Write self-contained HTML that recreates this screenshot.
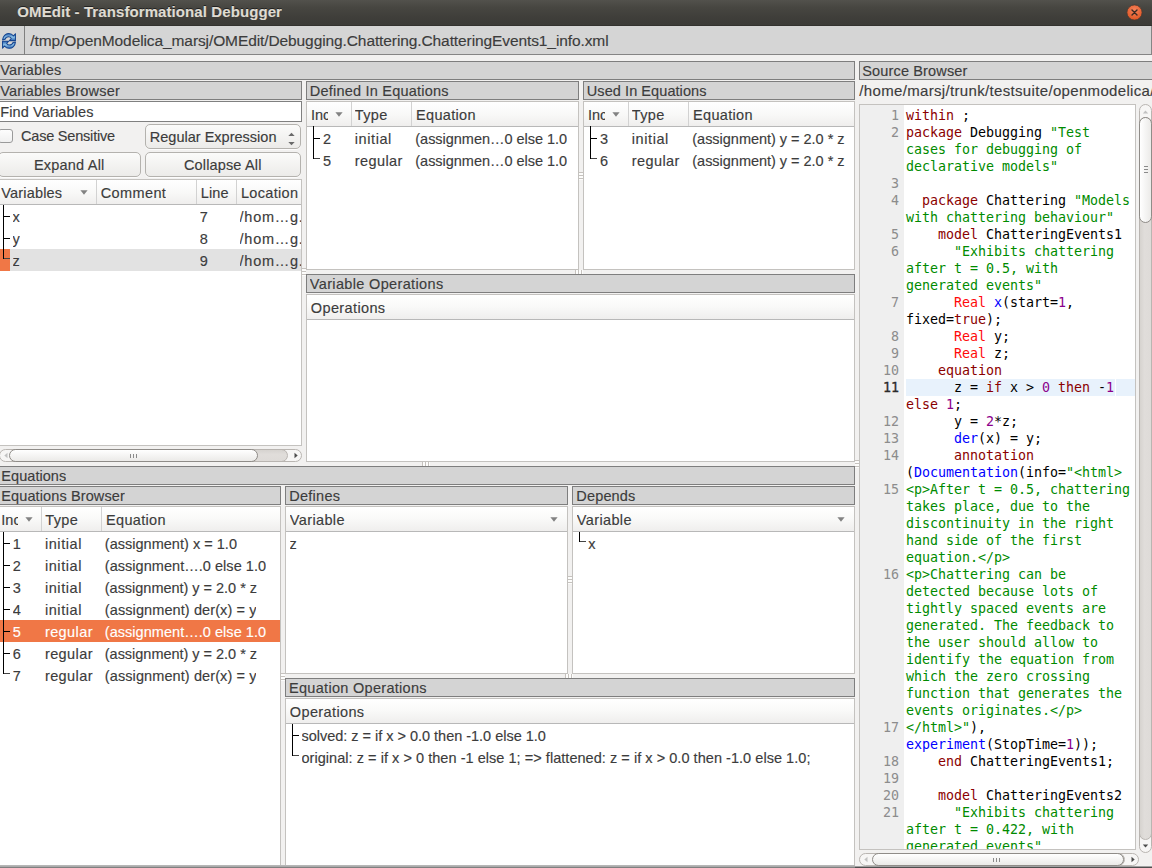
<!DOCTYPE html>
<html lang="en"><head><meta charset="utf-8"><title>OMEdit - Transformational Debugger</title>
<style>
html,body{margin:0;padding:0;}
body{width:1152px;height:868px;overflow:hidden;background:#f2f1f0;position:relative;font-family:"Liberation Sans", sans-serif;font-size:14.5px;color:#3c3c3c;}
body>div,body>svg,body>span{position:absolute;box-sizing:border-box;}
.t{white-space:pre;line-height:20px;overflow:hidden;-webkit-text-stroke:0.15px;}
.hd{background:#d4d4d4;border:1px solid #7e7e7e;}
.tw{background:#fff;border:1px solid #c4c2bf;}
.th{background:linear-gradient(#ffffff 0%,#f9f9f8 50%,#efeeed 100%);border-bottom:1px solid #b8b8b8;}
.btn{background:linear-gradient(#fbfbfa,#ecebe9);border:1px solid #b4b2ae;border-radius:5px;box-shadow:0 1px 0 rgba(255,255,255,.8);}
.sbo{background:#f7f6f5;border:1px solid #b9b5b1;border-radius:7px;}
.sbh{background:linear-gradient(#d6d3cf,#e0ddda 40%,#dedbd8);border:1px solid #b9b5b1;border-radius:7px;}
.sbv{background:linear-gradient(90deg,#d6d3cf,#e0ddda 40%,#dedbd8);border:1px solid #b9b5b1;border-radius:7px;}
.thumbh{background:linear-gradient(#ffffff,#ebeae8);border:1px solid #8f8c88;border-radius:7px;}
.thumbv{background:linear-gradient(90deg,#ffffff,#ebeae8);border:1px solid #8f8c88;border-radius:7px;}
#code{font-family:"DejaVu Sans Mono", "Liberation Mono", monospace;font-size:13.33px;line-height:17px;white-space:pre;color:#000;letter-spacing:-0.024px;}
#code div{position:absolute;left:0;height:17px;}
#code .n{color:#8c8c8c;width:39px;text-align:right;}
#code .c{left:46px;}
.k{color:#8b0000;} .s{color:#008b00;} .ty{color:#ff0a0a;} .f{color:#0000ff;} .nu{color:#8b008b;}
</style></head>
<body>
<div style="left:0px;top:0px;width:1152px;height:26px;background:linear-gradient(#52514c 0%,#474641 30%,#3e3d39 75%,#3c3b37 100%);border-bottom:1px solid #33322e;"></div>
<span class="t" style="left:17.3px;top:1.80px;font-size:15px;font-weight:bold;letter-spacing:0.089px;color:#dfdbd2;text-shadow:0 -1px 0 #222;">OMEdit - Transformational Debugger</span>
<svg style="left:1126px;top:4px" width="17" height="17" viewBox="0 0 17 17"><defs><radialGradient id="cg" cx="50%" cy="35%" r="65%"><stop offset="0" stop-color="#f5835c"/><stop offset="1" stop-color="#df5522"/></radialGradient></defs><circle cx="8.5" cy="8.5" r="7.6" fill="url(#cg)" stroke="#4a3a32" stroke-width="0.8"/><path d="M6 6 L11 11 M11 6 L6 11" stroke="#3a2a22" stroke-width="1.4" stroke-linecap="round"/></svg>
<div style="left:0px;top:26px;width:1152px;height:29px;background:#d5d5d5;border-bottom:1px solid #858585;border-right:1px solid #858585;"></div>
<div style="left:24px;top:26px;width:1px;height:29px;background:#808080;"></div>
<span class="t" style="left:30.3px;top:30.63px;font-size:15.5px;letter-spacing:-0.098px;">/tmp/OpenModelica_marsj/OMEdit/Debugging.Chattering.ChatteringEvents1_info.xml</span>
<svg style="left:0px;top:26px" width="24" height="29" viewBox="0 0 24 29"><defs><linearGradient id="rg" x1="0" y1="0" x2="0" y2="1"><stop offset="0" stop-color="#2a62b0"/><stop offset="0.5" stop-color="#8ec3e8"/><stop offset="1" stop-color="#2a62b0"/></linearGradient></defs><g transform="translate(9 14.95) scale(0.92) translate(-9 -14.95)" fill="url(#rg)" stroke="#15448f" stroke-width="1.1" stroke-linejoin="round"><path d="M2 13.9 C2.3 9.6 5.4 6.9 8.6 6.9 C10.9 6.9 12.7 7.9 13.9 9.5 L16 7.1 L16 14.6 L9.4 14.6 L11.5 12.3 C10.8 11.1 9.8 10.5 8.6 10.5 C6.9 10.5 5.3 11.5 4.7 13.2 Z"/><path d="M2 13.9 C2.3 9.6 5.4 6.9 8.6 6.9 C10.9 6.9 12.7 7.9 13.9 9.5 L16 7.1 L16 14.6 L9.4 14.6 L11.5 12.3 C10.8 11.1 9.8 10.5 8.6 10.5 C6.9 10.5 5.3 11.5 4.7 13.2 Z" transform="rotate(180 9 14.95)"/></g></svg>
<div class="hd" style="left:-1px;top:61px;width:856px;height:19px;"></div>
<span class="t" style="left:0.3px;top:60.18px;letter-spacing:0.203px;">Variables</span>
<div class="hd" style="left:-1px;top:81px;width:303px;height:19px;"></div>
<span class="t" style="left:0.3px;top:80.68px;letter-spacing:0.177px;">Variables Browser</span>
<div style="left:-1px;top:101px;width:303px;height:21px;background:#fff;border:1px solid #808080;"></div>
<span class="t" style="left:0.3px;top:101.58px;letter-spacing:0.114px;">Find Variables</span>
<div style="left:-2px;top:129px;width:15px;height:14px;background:linear-gradient(#fdfdfd,#f0f0f0);border:1px solid #9a9a9a;border-radius:3px;"></div>
<span class="t" style="left:21.0px;top:125.98px;letter-spacing:-0.201px;">Case Sensitive</span>
<div class="btn" style="left:145px;top:124px;width:156px;height:25px;"></div>
<span class="t" style="left:149.8px;top:126.98px;letter-spacing:0.009px;">Regular Expression</span>
<svg style="left:288px;top:130px" width="7" height="16" viewBox="0 0 7 16"><path d="M0.3 6 L3.5 2.8 L6.7 6 Z M0.3 12 L3.5 15.2 L6.7 12 Z" fill="#6a6a6a"/></svg>
<div class="btn" style="left:-2px;top:152px;width:143px;height:25px;"></div>
<span class="t" style="left:34.0px;top:154.58px;letter-spacing:0.197px;">Expand All</span>
<div class="btn" style="left:145px;top:152px;width:156px;height:25px;"></div>
<span class="t" style="left:184.0px;top:154.58px;letter-spacing:0.145px;">Collapse All</span>
<div class="tw" style="left:-1px;top:179px;width:303px;height:267px;"></div>
<div class="th" style="left:0px;top:180px;width:301px;height:25px;"></div>
<span class="t" style="left:1.3px;top:182.58px;letter-spacing:0.169px;">Variables</span>
<div style="left:96px;top:180px;width:1px;height:24px;background:#d2d2d2;"></div>
<span class="t" style="left:100.7px;top:182.58px;letter-spacing:0.392px;">Comment</span>
<div style="left:196px;top:180px;width:1px;height:24px;background:#d2d2d2;"></div>
<span class="t" style="left:200.7px;top:182.58px;letter-spacing:0.170px;">Line</span>
<div style="left:236px;top:180px;width:1px;height:24px;background:#d2d2d2;"></div>
<span class="t" style="left:241.0px;top:182.58px;letter-spacing:0.309px;">Location</span>
<svg style="left:80px;top:190px" width="8" height="5" viewBox="0 0 8 5"><path d="M0.4 0.2 L7.6 0.2 L4 4.8 Z" fill="#828282"/></svg>
<div style="left:0px;top:249px;width:301px;height:22px;background:#e2e2e2;"></div>
<div style="left:0px;top:249px;width:10px;height:22px;background:#f07746;"></div>
<div style="left:3px;top:205px;width:1px;height:54px;background:#000;"></div>
<div style="left:4px;top:216px;width:6px;height:1px;background:#000;"></div>
<div style="left:4px;top:238px;width:6px;height:1px;background:#000;"></div>
<div style="left:4px;top:258px;width:6px;height:1px;background:#444;"></div>
<span class="t" style="left:12.6px;top:206.98px;">x</span>
<span class="t" style="left:199.8px;top:206.98px;">7</span>
<span class="t" style="left:239.6px;top:206.98px;width:61.5px;letter-spacing:0.722px;">/hom…g.</span>
<span class="t" style="left:12.6px;top:228.98px;">y</span>
<span class="t" style="left:199.8px;top:228.98px;">8</span>
<span class="t" style="left:239.6px;top:228.98px;width:61.5px;letter-spacing:0.722px;">/hom…g.</span>
<span class="t" style="left:12.6px;top:250.98px;">z</span>
<span class="t" style="left:199.8px;top:250.98px;">9</span>
<span class="t" style="left:239.6px;top:250.98px;width:61.5px;letter-spacing:0.722px;">/hom…g.</span>
<div class="sbo" style="left:-1px;top:449px;width:303px;height:13px;"></div>
<div class="sbh" style="left:13px;top:449px;width:275px;height:13px;"></div>
<div class="thumbh" style="left:9px;top:449px;width:249px;height:13px;"></div>
<svg style="left:4px;top:452px" width="4" height="7" viewBox="0 0 4 7"><path d="M3.5 0.8 L0.3 3.5 L3.5 6.2 Z" fill="#c2c2c2"/></svg>
<svg style="left:294px;top:452px" width="4" height="7" viewBox="0 0 4 7"><path d="M0.5 0.8 L3.7 3.5 L0.5 6.2 Z" fill="#4c4c4c"/></svg>
<div style="left:130px;top:454px;width:1px;height:4px;background:#8a8a8a;"></div>
<div style="left:133px;top:454px;width:1px;height:4px;background:#8a8a8a;"></div>
<div style="left:136px;top:454px;width:1px;height:4px;background:#8a8a8a;"></div>
<div class="hd" style="left:306px;top:81px;width:273px;height:19px;"></div>
<span class="t" style="left:309.8px;top:80.68px;letter-spacing:0.219px;">Defined In Equations</span>
<div class="tw" style="left:306px;top:101px;width:273px;height:169px;"></div>
<div class="th" style="left:307px;top:102px;width:271px;height:25px;"></div>
<span class="t" style="left:310.9px;top:104.58px;width:17px;">Inc</span>
<div style="left:351px;top:102px;width:1px;height:24px;background:#d2d2d2;"></div>
<span class="t" style="left:354.8px;top:104.58px;letter-spacing:0.341px;">Type</span>
<div style="left:411px;top:102px;width:1px;height:24px;background:#d2d2d2;"></div>
<span class="t" style="left:416.1px;top:104.58px;letter-spacing:0.319px;">Equation</span>
<svg style="left:335px;top:112px" width="8" height="5" viewBox="0 0 8 5"><path d="M0.4 0.2 L7.6 0.2 L4 4.8 Z" fill="#828282"/></svg>
<div style="left:313px;top:126px;width:1px;height:33px;background:#000;"></div>
<div style="left:314px;top:138px;width:6px;height:1px;background:#000;"></div>
<div style="left:314px;top:158px;width:6px;height:1px;background:#444;"></div>
<span class="t" style="left:323.1px;top:128.98px;">2</span>
<span class="t" style="left:354.8px;top:128.98px;letter-spacing:0.579px;">initial</span>
<span class="t" style="left:415.3px;top:128.98px;letter-spacing:-0.030px;">(assignmen…0 else 1.0</span>
<span class="t" style="left:323.1px;top:150.98px;">5</span>
<span class="t" style="left:354.8px;top:150.98px;letter-spacing:0.408px;">regular</span>
<span class="t" style="left:415.3px;top:150.98px;letter-spacing:-0.030px;">(assignmen…0 else 1.0</span>
<div class="hd" style="left:583px;top:81px;width:272px;height:19px;"></div>
<span class="t" style="left:586.8px;top:80.68px;letter-spacing:0.071px;">Used In Equations</span>
<div class="tw" style="left:583px;top:101px;width:272px;height:169px;"></div>
<div class="th" style="left:584px;top:102px;width:270px;height:25px;"></div>
<span class="t" style="left:587.9px;top:104.58px;width:17px;">Inc</span>
<div style="left:628px;top:102px;width:1px;height:24px;background:#d2d2d2;"></div>
<span class="t" style="left:631.8px;top:104.58px;letter-spacing:0.341px;">Type</span>
<div style="left:688px;top:102px;width:1px;height:24px;background:#d2d2d2;"></div>
<span class="t" style="left:693.1px;top:104.58px;letter-spacing:0.319px;">Equation</span>
<svg style="left:612px;top:112px" width="8" height="5" viewBox="0 0 8 5"><path d="M0.4 0.2 L7.6 0.2 L4 4.8 Z" fill="#828282"/></svg>
<div style="left:590px;top:126px;width:1px;height:33px;background:#000;"></div>
<div style="left:591px;top:138px;width:6px;height:1px;background:#000;"></div>
<div style="left:591px;top:158px;width:6px;height:1px;background:#444;"></div>
<span class="t" style="left:600.1px;top:128.98px;">3</span>
<span class="t" style="left:631.8px;top:128.98px;letter-spacing:0.579px;">initial</span>
<span class="t" style="left:692.3px;top:128.98px;letter-spacing:-0.022px;">(assignment) y = 2.0 * z</span>
<span class="t" style="left:600.1px;top:150.98px;">6</span>
<span class="t" style="left:631.8px;top:150.98px;letter-spacing:0.408px;">regular</span>
<span class="t" style="left:692.3px;top:150.98px;letter-spacing:-0.022px;">(assignment) y = 2.0 * z</span>
<div class="hd" style="left:306px;top:274px;width:549px;height:19px;"></div>
<span class="t" style="left:309.8px;top:273.68px;letter-spacing:0.348px;">Variable Operations</span>
<div class="tw" style="left:306px;top:294px;width:549px;height:168px;"></div>
<div class="th" style="left:307px;top:295px;width:547px;height:25px;"></div>
<span class="t" style="left:310.8px;top:297.58px;letter-spacing:0.376px;">Operations</span>
<div class="hd" style="left:-1px;top:466px;width:856px;height:19px;"></div>
<span class="t" style="left:1.3px;top:465.78px;letter-spacing:0.056px;">Equations</span>
<div class="hd" style="left:-1px;top:486px;width:282px;height:19px;"></div>
<span class="t" style="left:1.3px;top:485.78px;letter-spacing:0.112px;">Equations Browser</span>
<div class="tw" style="left:-1px;top:506px;width:282px;height:366px;"></div>
<div class="th" style="left:0px;top:507px;width:280px;height:25px;"></div>
<span class="t" style="left:1.3px;top:509.58px;width:17px;">Inc</span>
<div style="left:41px;top:507px;width:1px;height:24px;background:#d2d2d2;"></div>
<span class="t" style="left:45.3px;top:509.58px;letter-spacing:0.341px;">Type</span>
<div style="left:101px;top:507px;width:1px;height:24px;background:#d2d2d2;"></div>
<span class="t" style="left:106.1px;top:509.58px;letter-spacing:0.319px;">Equation</span>
<svg style="left:25px;top:517px" width="8" height="5" viewBox="0 0 8 5"><path d="M0.4 0.2 L7.6 0.2 L4 4.8 Z" fill="#828282"/></svg>
<div style="left:0px;top:620px;width:280px;height:22px;background:#f07746;"></div>
<div style="left:3px;top:532px;width:1px;height:142px;background:#000;"></div>
<div style="left:4px;top:543px;width:6px;height:1px;background:#000;"></div>
<div style="left:4px;top:565px;width:6px;height:1px;background:#000;"></div>
<div style="left:4px;top:587px;width:6px;height:1px;background:#000;"></div>
<div style="left:4px;top:609px;width:6px;height:1px;background:#000;"></div>
<div style="left:4px;top:631px;width:6px;height:1px;background:#000;"></div>
<div style="left:4px;top:653px;width:6px;height:1px;background:#000;"></div>
<div style="left:4px;top:673px;width:6px;height:1px;background:#444;"></div>
<span class="t" style="left:12.8px;top:533.98px;">1</span>
<span class="t" style="left:44.9px;top:533.98px;letter-spacing:0.579px;">initial</span>
<span class="t" style="left:104.8px;top:533.98px;letter-spacing:0.021px;">(assignment) x = 1.0</span>
<span class="t" style="left:12.8px;top:555.98px;">2</span>
<span class="t" style="left:44.9px;top:555.98px;letter-spacing:0.579px;">initial</span>
<span class="t" style="left:104.8px;top:555.98px;letter-spacing:0.040px;">(assignment….0 else 1.0</span>
<span class="t" style="left:12.8px;top:577.98px;">3</span>
<span class="t" style="left:44.9px;top:577.98px;letter-spacing:0.579px;">initial</span>
<span class="t" style="left:104.8px;top:577.98px;letter-spacing:-0.022px;">(assignment) y = 2.0 * z</span>
<span class="t" style="left:12.8px;top:599.98px;">4</span>
<span class="t" style="left:44.9px;top:599.98px;letter-spacing:0.579px;">initial</span>
<span class="t" style="left:104.8px;top:599.98px;letter-spacing:0.096px;">(assignment) der(x) = y</span>
<span class="t" style="left:12.8px;top:621.98px;color:#fff;">5</span>
<span class="t" style="left:44.9px;top:621.98px;letter-spacing:0.408px;color:#fff;">regular</span>
<span class="t" style="left:104.8px;top:621.98px;letter-spacing:0.040px;color:#fff;">(assignment….0 else 1.0</span>
<span class="t" style="left:12.8px;top:643.98px;">6</span>
<span class="t" style="left:44.9px;top:643.98px;letter-spacing:0.408px;">regular</span>
<span class="t" style="left:104.8px;top:643.98px;letter-spacing:-0.022px;">(assignment) y = 2.0 * z</span>
<span class="t" style="left:12.8px;top:665.98px;">7</span>
<span class="t" style="left:44.9px;top:665.98px;letter-spacing:0.408px;">regular</span>
<span class="t" style="left:104.8px;top:665.98px;letter-spacing:0.096px;">(assignment) der(x) = y</span>
<div class="hd" style="left:285px;top:486px;width:283px;height:19px;"></div>
<span class="t" style="left:289.3px;top:485.68px;letter-spacing:0.247px;">Defines</span>
<div class="tw" style="left:285px;top:506px;width:283px;height:168px;"></div>
<div class="th" style="left:286px;top:507px;width:281px;height:25px;"></div>
<span class="t" style="left:289.8px;top:509.58px;letter-spacing:0.372px;">Variable</span>
<svg style="left:550px;top:517px" width="8" height="5" viewBox="0 0 8 5"><path d="M0.4 0.2 L7.6 0.2 L4 4.8 Z" fill="#828282"/></svg>
<span class="t" style="left:289.6px;top:533.98px;">z</span>
<div class="hd" style="left:572px;top:486px;width:283px;height:19px;"></div>
<span class="t" style="left:576.3px;top:485.68px;letter-spacing:0.165px;">Depends</span>
<div class="tw" style="left:572px;top:506px;width:283px;height:168px;"></div>
<div class="th" style="left:573px;top:507px;width:281px;height:25px;"></div>
<span class="t" style="left:576.8px;top:509.58px;letter-spacing:0.372px;">Variable</span>
<svg style="left:837px;top:517px" width="8" height="5" viewBox="0 0 8 5"><path d="M0.4 0.2 L7.6 0.2 L4 4.8 Z" fill="#828282"/></svg>
<div style="left:579px;top:532px;width:1px;height:10px;background:#000;"></div>
<div style="left:580px;top:541px;width:6px;height:1px;background:#444;"></div>
<span class="t" style="left:588.3px;top:533.98px;">x</span>
<div class="hd" style="left:285px;top:678px;width:570px;height:19px;"></div>
<span class="t" style="left:289.0px;top:677.68px;letter-spacing:0.300px;">Equation Operations</span>
<div class="tw" style="left:285px;top:698px;width:570px;height:174px;"></div>
<div class="th" style="left:286px;top:699px;width:568px;height:25px;"></div>
<span class="t" style="left:289.8px;top:701.58px;letter-spacing:0.376px;">Operations</span>
<div style="left:292px;top:724px;width:1px;height:32px;background:#000;"></div>
<div style="left:293px;top:735px;width:6px;height:1px;background:#000;"></div>
<div style="left:293px;top:755px;width:6px;height:1px;background:#444;"></div>
<span class="t" style="left:301.5px;top:725.98px;letter-spacing:-0.018px;">solved: z = if x &gt; 0.0 then -1.0 else 1.0</span>
<span class="t" style="left:301.5px;top:747.98px;letter-spacing:0.041px;">original: z = if x &gt; 0 then -1 else 1; =&gt; flattened: z = if x &gt; 0.0 then -1.0 else 1.0;</span>
<div style="left:302px;top:268px;width:4px;height:8px;background:repeating-linear-gradient(180deg,#c6c2be 0,#c6c2be 1px,#fdfdfc 1px,#fdfdfc 3px);"></div>
<div style="left:579px;top:172px;width:4px;height:8px;background:repeating-linear-gradient(180deg,#c6c2be 0,#c6c2be 1px,#fdfdfc 1px,#fdfdfc 3px);"></div>
<div style="left:568px;top:576px;width:4px;height:8px;background:repeating-linear-gradient(180deg,#c6c2be 0,#c6c2be 1px,#fdfdfc 1px,#fdfdfc 3px);"></div>
<div style="left:281px;top:673px;width:4px;height:8px;background:repeating-linear-gradient(180deg,#c6c2be 0,#c6c2be 1px,#fdfdfc 1px,#fdfdfc 3px);"></div>
<div style="left:855px;top:460px;width:4px;height:8px;background:repeating-linear-gradient(180deg,#c6c2be 0,#c6c2be 1px,#fdfdfc 1px,#fdfdfc 3px);"></div>
<div style="left:422px;top:462px;width:8px;height:4px;background:repeating-linear-gradient(90deg,#c6c2be 0,#c6c2be 1px,#fdfdfc 1px,#fdfdfc 3px);"></div>
<div style="left:575px;top:270px;width:8px;height:4px;background:repeating-linear-gradient(90deg,#c6c2be 0,#c6c2be 1px,#fdfdfc 1px,#fdfdfc 3px);"></div>
<div style="left:565px;top:674px;width:8px;height:4px;background:repeating-linear-gradient(90deg,#c6c2be 0,#c6c2be 1px,#fdfdfc 1px,#fdfdfc 3px);"></div>
<div class="hd" style="left:859px;top:61px;width:294px;height:19px;"></div>
<span class="t" style="left:862.3px;top:60.68px;letter-spacing:0.146px;">Source Browser</span>
<span class="t" style="left:859.3px;top:81.30px;font-size:15px;letter-spacing:0.334px;">/home/marsj/trunk/testsuite/openmodelica/</span>
<div class="tw" style="left:859px;top:104px;width:277px;height:746px;overflow:hidden;">
<div style="position:absolute;left:0;top:0;width:44px;height:100%;background:#efefef;"></div>
<div id="code" style="position:absolute;left:0;top:2px;width:275px;">
<div class="n" style="top:0px">1</div>
<div class="c" style="top:0px"><span class="k">within</span> ;</div>
<div class="n" style="top:17px">2</div>
<div class="c" style="top:17px"><span class="k">package</span> Debugging <span class="s">"Test</span></div>
<div class="c" style="top:34px"><span class="s">cases for debugging of</span></div>
<div class="c" style="top:51px"><span class="s">declarative models"</span></div>
<div class="n" style="top:68px">3</div>
<div class="n" style="top:85px">4</div>
<div class="c" style="top:85px">  <span class="k">package</span> Chattering <span class="s">"Models</span></div>
<div class="c" style="top:102px"><span class="s">with chattering behaviour"</span></div>
<div class="n" style="top:119px">5</div>
<div class="c" style="top:119px">    <span class="k">model</span> ChatteringEvents1</div>
<div class="n" style="top:136px">6</div>
<div class="c" style="top:136px">      <span class="s">"Exhibits chattering</span></div>
<div class="c" style="top:153px"><span class="s">after t = 0.5, with</span></div>
<div class="c" style="top:170px"><span class="s">generated events"</span></div>
<div class="n" style="top:187px">7</div>
<div class="c" style="top:187px">      <span class="ty">Real</span> <span class="f">x</span>(start=<span class="nu">1</span>,</div>
<div class="c" style="top:204px">fixed=<span class="k">true</span>);</div>
<div class="n" style="top:221px">8</div>
<div class="c" style="top:221px">      <span class="ty">Real</span> y;</div>
<div class="n" style="top:238px">9</div>
<div class="c" style="top:238px">      <span class="ty">Real</span> z;</div>
<div class="n" style="top:255px">10</div>
<div class="c" style="top:255px">    <span class="k">equation</span></div>
<div style="top:272px;left:46px;width:229px;background:#e8f2fc;"></div>
<div style="top:272px;left:255px;width:1px;background:#fff;"></div>
<div class="n" style="top:272px;color:#2b2b2b;-webkit-text-stroke:0.3px;">11</div>
<div class="c" style="top:272px">      z = <span class="k">if</span> x &gt; <span class="nu">0</span> <span class="k">then</span> -<span class="nu">1</span></div>
<div class="c" style="top:289px"><span class="k">else</span> <span class="nu">1</span>;</div>
<div class="n" style="top:306px">12</div>
<div class="c" style="top:306px">      y = <span class="nu">2</span>*z;</div>
<div class="n" style="top:323px">13</div>
<div class="c" style="top:323px">      <span class="f">der</span>(x) = y;</div>
<div class="n" style="top:340px">14</div>
<div class="c" style="top:340px">      <span class="k">annotation</span></div>
<div class="c" style="top:357px">(<span class="f">Documentation</span>(info=<span class="s">"&lt;html&gt;</span></div>
<div class="n" style="top:374px">15</div>
<div class="c" style="top:374px"><span class="s">&lt;p&gt;After t = 0.5, chattering</span></div>
<div class="c" style="top:391px"><span class="s">takes place, due to the</span></div>
<div class="c" style="top:408px"><span class="s">discontinuity in the right</span></div>
<div class="c" style="top:425px"><span class="s">hand side of the first</span></div>
<div class="c" style="top:442px"><span class="s">equation.&lt;/p&gt;</span></div>
<div class="n" style="top:459px">16</div>
<div class="c" style="top:459px"><span class="s">&lt;p&gt;Chattering can be</span></div>
<div class="c" style="top:476px"><span class="s">detected because lots of</span></div>
<div class="c" style="top:493px"><span class="s">tightly spaced events are</span></div>
<div class="c" style="top:510px"><span class="s">generated. The feedback to</span></div>
<div class="c" style="top:527px"><span class="s">the user should allow to</span></div>
<div class="c" style="top:544px"><span class="s">identify the equation from</span></div>
<div class="c" style="top:561px"><span class="s">which the zero crossing</span></div>
<div class="c" style="top:578px"><span class="s">function that generates the</span></div>
<div class="c" style="top:595px"><span class="s">events originates.&lt;/p&gt;</span></div>
<div class="n" style="top:612px">17</div>
<div class="c" style="top:612px"><span class="s">&lt;/html&gt;"</span>),</div>
<div class="c" style="top:629px"><span class="f">experiment</span>(StopTime=<span class="nu">1</span>));</div>
<div class="n" style="top:646px">18</div>
<div class="c" style="top:646px">    <span class="k">end</span> ChatteringEvents1;</div>
<div class="n" style="top:663px">19</div>
<div class="n" style="top:680px">20</div>
<div class="c" style="top:680px">    <span class="k">model</span> ChatteringEvents2</div>
<div class="n" style="top:697px">21</div>
<div class="c" style="top:697px">      <span class="s">"Exhibits chattering</span></div>
<div class="c" style="top:714px"><span class="s">after t = 0.422, with</span></div>
<div class="c" style="top:731px"><span class="s">generated events"</span></div>
</div></div>
<div style="left:0px;top:865px;width:855px;height:3px;background:linear-gradient(#bcbcbc 0,#b0b0b0 34%,#a6a6a6 66%,#808080 67%,#808080 100%);"></div>
<div style="left:855px;top:866px;width:297px;height:2px;background:linear-gradient(#a0a0a0 0,#a0a0a0 50%,#4e4e4e 50%,#4e4e4e 100%);"></div>
<div class="sbo" style="left:1139px;top:104px;width:13px;height:749px;"></div>
<div class="sbv" style="left:1139px;top:117px;width:13px;height:723px;"></div>
<div class="thumbv" style="left:1139px;top:117px;width:13px;height:106px;"></div>
<svg style="left:1142px;top:110px" width="7" height="4" viewBox="0 0 7 4"><path d="M0.8 3.5 L3.5 0.5 L6.2 3.5 Z" fill="#c2c2c2"/></svg>
<svg style="left:1142px;top:844px" width="7" height="4" viewBox="0 0 7 4"><path d="M0.8 0.5 L3.5 3.5 L6.2 0.5 Z" fill="#4c4c4c"/></svg>
<div style="left:1144px;top:166px;width:4px;height:1px;background:#8a8a8a;"></div>
<div style="left:1144px;top:169px;width:4px;height:1px;background:#8a8a8a;"></div>
<div style="left:1144px;top:172px;width:4px;height:1px;background:#8a8a8a;"></div>
<div class="sbo" style="left:859px;top:853px;width:280px;height:13px;"></div>
<div class="sbh" style="left:873px;top:853px;width:252px;height:13px;"></div>
<div class="thumbh" style="left:872px;top:853px;width:252px;height:13px;"></div>
<svg style="left:864px;top:856px" width="4" height="7" viewBox="0 0 4 7"><path d="M3.5 0.8 L0.3 3.5 L3.5 6.2 Z" fill="#c2c2c2"/></svg>
<svg style="left:1131px;top:856px" width="4" height="7" viewBox="0 0 4 7"><path d="M0.5 0.8 L3.7 3.5 L0.5 6.2 Z" fill="#4c4c4c"/></svg>
<div style="left:993px;top:858px;width:1px;height:4px;background:#8a8a8a;"></div>
<div style="left:996px;top:858px;width:1px;height:4px;background:#8a8a8a;"></div>
<div style="left:999px;top:858px;width:1px;height:4px;background:#8a8a8a;"></div>
</body></html>
